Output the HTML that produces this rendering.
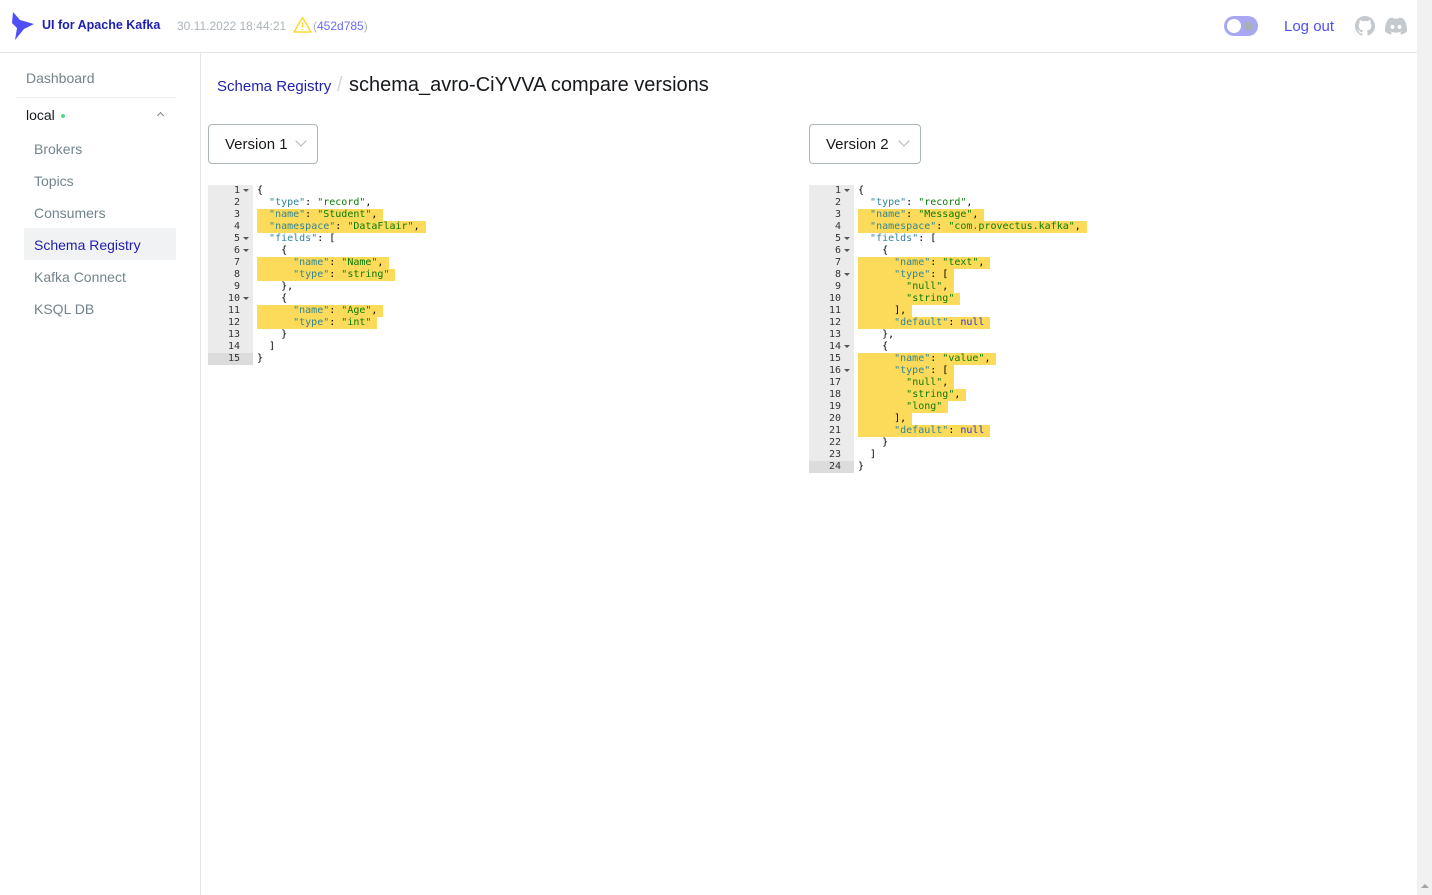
<!DOCTYPE html>
<html><head><meta charset="utf-8"><style>
*{box-sizing:border-box;margin:0;padding:0}
body{width:1432px;height:895px;overflow:hidden;background:#fff;font-family:"Liberation Sans",sans-serif;position:relative}
.hdr{position:absolute;left:0;top:0;width:1417px;height:53px;border-bottom:1px solid #e3e6e8}
.scroll{position:absolute;right:0;top:0;width:15px;height:895px;background:#f1f1f1}
.side{position:absolute;left:0;top:53px;width:201px;height:842px;border-right:1px solid #e3e6e8}
.nav{position:absolute;font-size:14px;color:#73848c}
.ed{position:absolute;font-family:"DejaVu Sans Mono","Liberation Mono",monospace;font-size:10px;line-height:12px}
.gut{position:absolute;left:0;top:0;width:45px;background:#ebebeb;color:#333;text-align:right}
.gut div{padding-right:13px;position:relative;height:12px}
.gut div.f:after{content:"";position:absolute;right:4px;top:4px;border:3px solid transparent;border-top:3px solid #555;border-bottom:0}
.gut div.a{background:#dcdcdc}
.code{position:absolute;left:49px;top:0;color:#000}
.code div{height:12px;white-space:pre}
.h{background:#fddb5a;padding-right:6px;display:inline-block;height:12px}
.k{color:#318495}.s{color:#0a7a0a}.n{color:#3030e0}
.sel{position:absolute;top:124px;height:40px;border:1px solid #abb5ba;border-radius:4px;font-size:15px;color:#171a1c;padding:11px 0 0 16px}
.chev{position:absolute;right:12px;top:12px;width:8px;height:8px;border-right:1.5px solid #abb5ba;border-bottom:1.5px solid #abb5ba;transform:rotate(45deg)}
</style></head><body>
<div class="hdr">
<svg style="position:absolute;left:11px;top:11px" width="24" height="30" viewBox="0 0 24 30"><path d="M2 1 L9 9 L23 13 L13 18 L4 29 L6 17 L1 12 Z" fill="#4f4ff7"/></svg>
<div style="position:absolute;left:42px;top:18px;font-size:12.5px;font-weight:bold;color:#1e1eb0">UI for Apache Kafka</div>
<div style="position:absolute;left:177px;top:19px;font-size:12px;color:#abb5ba">30.11.2022 18:44:21</div>
<svg style="position:absolute;left:293px;top:16px" width="19" height="17" viewBox="0 0 19 17"><path d="M9.5 1.5 L18 16 L1 16 Z" fill="none" stroke="#fdd835" stroke-width="1.5" stroke-linejoin="round"/><path d="M9.5 6.5 V11.5 M9.5 13 V14" stroke="#fdd835" stroke-width="1.5"/></svg>
<div style="position:absolute;left:313px;top:19px;font-size:12px;color:#abb5ba">(<span style="color:#6a6af7">452d785</span>)</div>
<div style="position:absolute;left:1224px;top:16px;width:34px;height:20px;border-radius:10px;background:#a7a7f5"><div style="position:absolute;left:3px;top:3px;width:14px;height:14px;border-radius:50%;background:#fff"></div><div style="position:absolute;left:20px;top:5px;width:9px;height:10px;border-radius:50%;background:#a7b0ba"></div></div>
<div style="position:absolute;left:1284px;top:18px;font-size:15px;color:#4f4ff7">Log out</div>
<svg style="position:absolute;left:1355px;top:16px" width="20" height="20" viewBox="0 0 16 16"><path fill="#c4c9cd" d="M8 0C3.58 0 0 3.58 0 8c0 3.54 2.29 6.53 5.47 7.59.4.07.55-.17.55-.38v-1.33c-2.23.48-2.7-1.07-2.7-1.07-.36-.92-.89-1.17-.89-1.17-.73-.5.06-.49.06-.49.8.06 1.23.83 1.23.83.72 1.22 1.87.87 2.33.66.07-.52.28-.87.51-1.07-1.78-.2-3.64-.89-3.64-3.95 0-.87.31-1.59.82-2.15-.08-.2-.36-1.02.08-2.12 0 0 .67-.21 2.2.82a7.6 7.6 0 014 0c1.53-1.04 2.2-.82 2.2-.82.44 1.1.16 1.92.08 2.12.51.56.82 1.27.82 2.15 0 3.07-1.87 3.75-3.65 3.95.29.25.54.73.54 1.48v2.2c0 .21.15.46.55.38A8 8 0 0016 8c0-4.42-3.58-8-8-8z"/></svg>
<svg style="position:absolute;left:1385px;top:17px" width="22" height="18" viewBox="0 0 22 17"><path fill="#c4c9cd" d="M18.6 1.4A18 18 0 0014 0l-.6 1.2a16.7 16.7 0 00-4.9 0L8 0a18 18 0 00-4.6 1.4C.5 5.8-.3 10 .1 14.2A18 18 0 005.7 17l1.2-1.9a11.5 11.5 0 01-1.8-.9l.4-.3a13 13 0 0011 0l.4.3a11.5 11.5 0 01-1.8.9l1.2 1.9a18 18 0 005.6-2.8c.5-4.9-.8-9.1-3.3-12.8zM7.4 11.6c-1.1 0-2-1-2-2.2s.9-2.2 2-2.2 2 1 2 2.2-.9 2.2-2 2.2zm7.2 0c-1.1 0-2-1-2-2.2s.9-2.2 2-2.2 2 1 2 2.2-.9 2.2-2 2.2z"/></svg>
</div>
<div class="scroll"><div style="position:absolute;left:4px;top:884px;border:4px solid transparent;border-bottom:4px solid #a3a3a3;border-top:0"></div></div>
<div class="side">
<div class="nav" style="left:26px;top:17px">Dashboard</div>
<div style="position:absolute;left:16px;top:44px;width:160px;border-top:1px solid #eef0f1"></div>
<div class="nav" style="left:26px;top:54px;color:#171a1c">local <span style="display:inline-block;width:4px;height:4px;border-radius:50%;background:#5cd685;vertical-align:middle;margin-left:2px"></span></div>
<div style="position:absolute;left:158px;top:60px;width:5px;height:5px;border-left:1px solid #73848c;border-top:1px solid #73848c;transform:rotate(45deg)"></div>
<div class="nav" style="left:34px;top:88px">Brokers</div>
<div class="nav" style="left:34px;top:120px">Topics</div>
<div class="nav" style="left:34px;top:152px">Consumers</div>
<div style="position:absolute;left:24px;top:175px;width:152px;height:32px;background:#f1f2f3"></div>
<div class="nav" style="left:34px;top:184px;color:#1e1eb0">Schema Registry</div>
<div class="nav" style="left:34px;top:216px">Kafka Connect</div>
<div class="nav" style="left:34px;top:248px">KSQL DB</div>
</div>
<div style="position:absolute;left:217px;top:78px;font-size:15px;color:#1e1eb0">Schema Registry</div>
<div style="position:absolute;left:337px;top:74px;font-size:20px;color:#d5d9dc">/</div>
<div style="position:absolute;left:349px;top:74px;font-size:20px;color:#171a1c">schema_avro-CiYVVA compare versions</div>
<div class="sel" style="left:208px;width:110px">Version 1<div class="chev"></div></div>
<div class="sel" style="left:809px;width:112px">Version 2<div class="chev"></div></div>

<div class="ed" style="left:208px;top:185px">
<div class="gut"><div class="f">1</div><div>2</div><div>3</div><div>4</div><div class="f">5</div><div class="f">6</div><div>7</div><div>8</div><div>9</div><div class="f">10</div><div>11</div><div>12</div><div>13</div><div>14</div><div class="a">15</div></div>
<div class="code"><div>{</div><div>  <span class="k">"type"</span>: <span class="s">"record"</span>,</div><div><span class="h">  <span class="k">"name"</span>: <span class="s">"Student"</span>,</span></div><div><span class="h">  <span class="k">"namespace"</span>: <span class="s">"DataFlair"</span>,</span></div><div>  <span class="k">"fields"</span>: [</div><div>    {</div><div><span class="h">      <span class="k">"name"</span>: <span class="s">"Name"</span>,</span></div><div><span class="h">      <span class="k">"type"</span>: <span class="s">"string"</span></span></div><div>    },</div><div>    {</div><div><span class="h">      <span class="k">"name"</span>: <span class="s">"Age"</span>,</span></div><div><span class="h">      <span class="k">"type"</span>: <span class="s">"int"</span></span></div><div>    }</div><div>  ]</div><div>}</div></div></div>

<div class="ed" style="left:809px;top:185px">
<div class="gut"><div class="f">1</div><div>2</div><div>3</div><div>4</div><div class="f">5</div><div class="f">6</div><div>7</div><div class="f">8</div><div>9</div><div>10</div><div>11</div><div>12</div><div>13</div><div class="f">14</div><div>15</div><div class="f">16</div><div>17</div><div>18</div><div>19</div><div>20</div><div>21</div><div>22</div><div>23</div><div class="a">24</div></div>
<div class="code"><div>{</div><div>  <span class="k">"type"</span>: <span class="s">"record"</span>,</div><div><span class="h">  <span class="k">"name"</span>: <span class="s">"Message"</span>,</span></div><div><span class="h">  <span class="k">"namespace"</span>: <span class="s">"com.provectus.kafka"</span>,</span></div><div>  <span class="k">"fields"</span>: [</div><div>    {</div><div><span class="h">      <span class="k">"name"</span>: <span class="s">"text"</span>,</span></div><div><span class="h">      <span class="k">"type"</span>: [</span></div><div><span class="h">        <span class="s">"null"</span>,</span></div><div><span class="h">        <span class="s">"string"</span></span></div><div><span class="h">      ],</span></div><div><span class="h">      <span class="k">"default"</span>: <span class="n">null</span></span></div><div>    },</div><div>    {</div><div><span class="h">      <span class="k">"name"</span>: <span class="s">"value"</span>,</span></div><div><span class="h">      <span class="k">"type"</span>: [</span></div><div><span class="h">        <span class="s">"null"</span>,</span></div><div><span class="h">        <span class="s">"string"</span>,</span></div><div><span class="h">        <span class="s">"long"</span></span></div><div><span class="h">      ],</span></div><div><span class="h">      <span class="k">"default"</span>: <span class="n">null</span></span></div><div>    }</div><div>  ]</div><div>}</div></div></div>
</body></html>
